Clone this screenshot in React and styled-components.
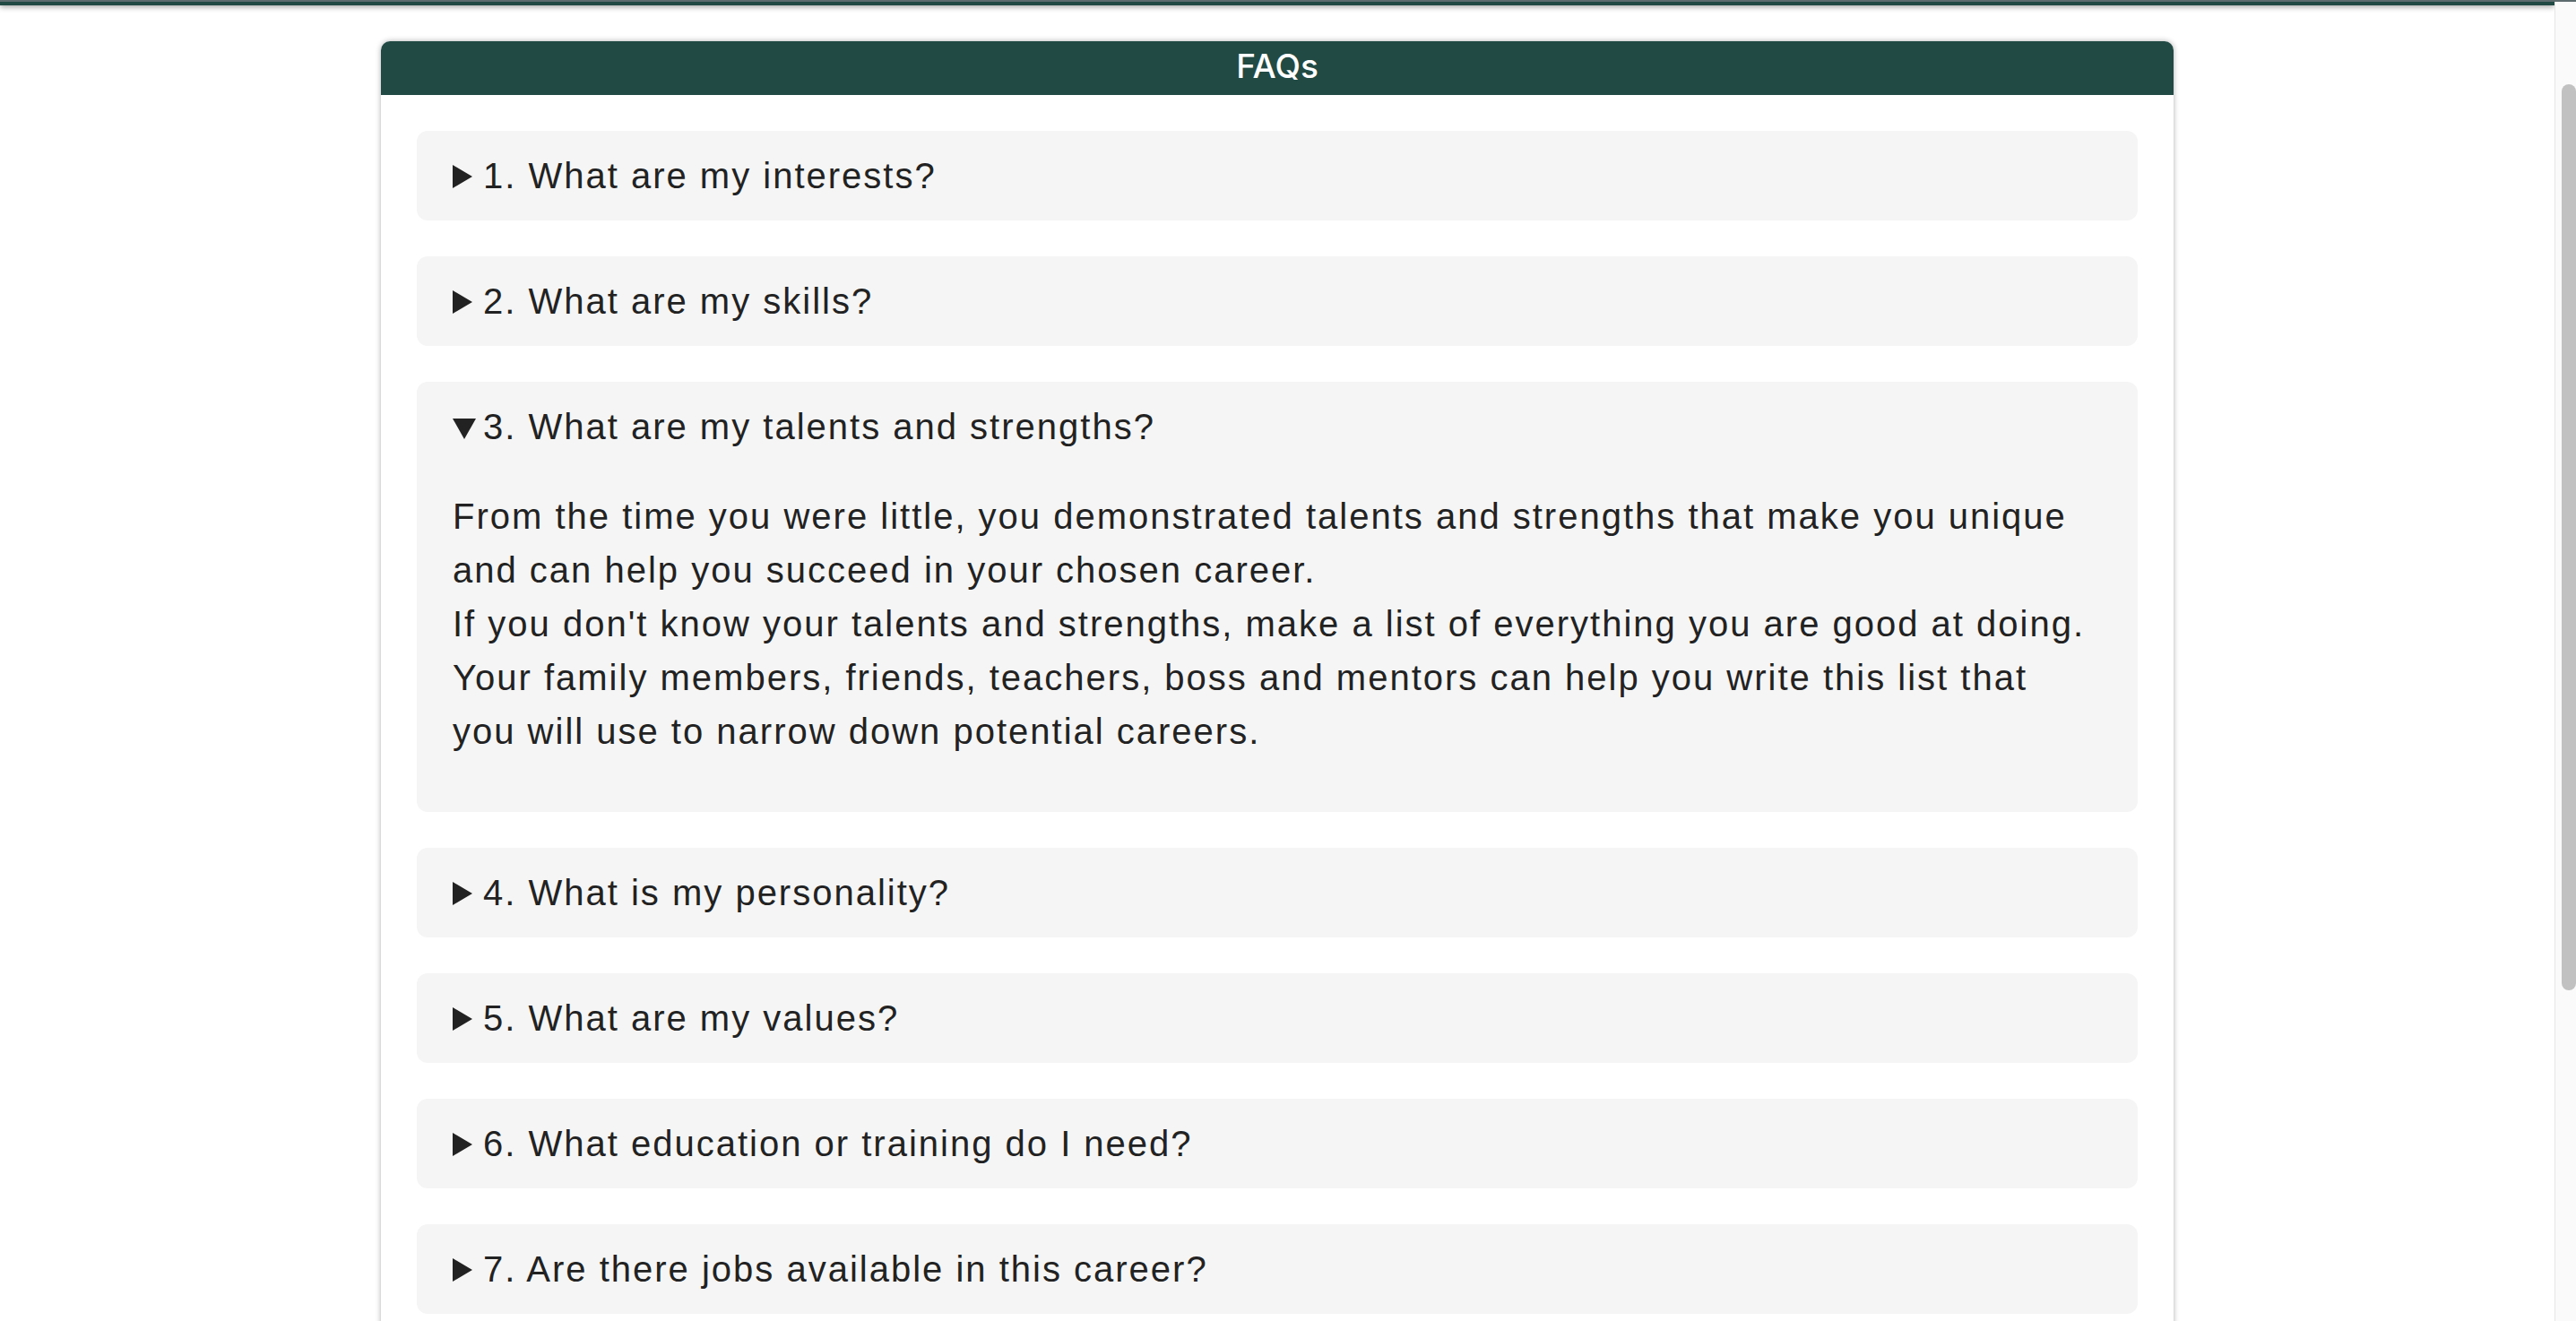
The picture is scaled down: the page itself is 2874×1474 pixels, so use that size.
import React, { useLayoutEffect, useRef } from "react";
import styled, { createGlobalStyle } from "styled-components";

const GlobalStyle = createGlobalStyle`
  html, body {
    margin: 0;
    padding: 0;
    height: 100%;
    overflow: hidden;
    background: #ffffff;
  }
  #root { height: 100%; }
  * { box-sizing: border-box; }
`;

const Viewport = styled.div`
  height: 100vh;
  display: flex;
  flex-direction: column;
  border-top: 2px solid #5e6b6e;
`;

const Window = styled.div`
  flex: 1;
  min-height: 0;
  display: flex;
`;

const Scroller = styled.div`
  flex: 1;
  min-width: 0;
  overflow-y: scroll;
  overflow-x: hidden;
  background: #ffffff;
  scrollbar-width: none;
  &::-webkit-scrollbar {
    display: none;
  }
`;

const ScrollTrack = styled.div`
  width: 24px;
  flex: 0 0 24px;
  background: #fafafa;
  border-left: 1px solid #e6e6e6;
  padding-top: 92px;
  display: flex;
  flex-direction: column;
  align-items: flex-end;
`;

const ScrollThumb = styled.div`
  width: 16px;
  height: 1011px;
  background: #c1c1c1;
  border-radius: 8px;
`;

const SiteHeader = styled.header`
  height: 138px;
  background: #214a45;
  box-shadow: 0 2px 6px rgba(0, 0, 0, 0.35);
  position: relative;
  z-index: 1;
`;

const Page = styled.main`
  display: flex;
  justify-content: center;
  padding: 40px 0 225px;
`;

const Card = styled.section`
  width: 2000px;
  background: #ffffff;
  border-radius: 10px 10px 0 0;
  box-shadow: 0 0 6px rgba(0, 0, 0, 0.32);
`;

const CardTitle = styled.h2`
  margin: 0;
  height: 60px;
  padding-bottom: 4px;
  line-height: 56px;
  background: #214a45;
  color: #ffffff;
  border-radius: 10px 10px 0 0;
  text-align: center;
  font-family: Inter, "Liberation Sans", Arial, sans-serif;
  font-weight: 500;
  font-size: 37px;
`;

const CardBody = styled.div`
  display: flex;
  flex-direction: column;
  gap: 40px;
  padding: 40px;
`;

const Item = styled.details`
  background: #f5f5f5;
  border-radius: 12px;
  padding: 20px 40px;
  font-family: "Liberation Sans", Arial, Helvetica, sans-serif;
  font-size: 40px;
  line-height: 60px;
  letter-spacing: 2px;
  color: #222222;
`;

const Question = styled.summary`
  display: block;
  list-style: none;
  cursor: pointer;
  outline: none;

  &::-webkit-details-marker {
    display: none;
  }

  &::before {
    content: "";
    display: inline-block;
    width: 0;
    height: 0;
    border-style: solid;
    border-color: transparent transparent transparent #222222;
    border-width: 13px 0 13px 22px;
    margin-right: 12px;
    vertical-align: baseline;
  }

  ${Item}[open] > &::before {
    border-color: #222222 transparent transparent transparent;
    border-width: 23px 13px 0 13px;
    margin-right: 8px;
  }
`;

const Answer = styled.p`
  margin: 40px 0;
`;

const faqs = [
  {
    q: "1. What are my interests?",
    a: ["Think about the activities you enjoy most, at school, at work and in your free time."],
  },
  {
    q: "2. What are my skills?",
    a: ["List the things you have learned to do well through practice, study and experience."],
  },
  {
    q: "3. What are my talents and strengths?",
    open: true,
    a: [
      "From the time you were little, you demonstrated talents and strengths that make you unique",
      "and can help you succeed in your chosen career.",
      "If you don't know your talents and strengths, make a list of everything you are good at doing.",
      "Your family members, friends, teachers, boss and mentors can help you write this list that",
      "you will use to narrow down potential careers.",
    ],
  },
  {
    q: "4. What is my personality?",
    a: ["Your personality helps decide which work environments suit you best."],
  },
  {
    q: "5. What are my values?",
    a: ["Your values are the things that matter most to you in life and at work."],
  },
  {
    q: "6. What education or training do I need?",
    a: ["Find out which degrees, certificates or apprenticeships are required for the career."],
  },
  {
    q: "7. Are there jobs available in this career?",
    a: ["Look at job listings and employment outlook information for your area."],
  },
  {
    q: "8. How much money can I make?",
    a: ["Research typical starting and average salaries for the career you are considering."],
  },
  {
    q: "9. Where can I learn more?",
    a: ["Talk with a counselor, mentor or someone who already works in the career."],
  },
];

export default function App() {
  const scrollRef = useRef(null);

  useLayoutEffect(() => {
    if (scrollRef.current) scrollRef.current.scrollTop = 134;
  }, []);

  return (
    <>
      <GlobalStyle />
      <Viewport>
        <Window>
          <Scroller ref={scrollRef}>
            <SiteHeader />
            <Page>
              <Card>
                <CardTitle>FAQs</CardTitle>
                <CardBody>
                  {faqs.map((f) => (
                    <Item key={f.q} open={f.open || undefined}>
                      <Question>{f.q}</Question>
                      <Answer>
                        {f.a.map((line, i) => (
                          <React.Fragment key={i}>
                            {i > 0 && <br />}
                            {line}
                          </React.Fragment>
                        ))}
                      </Answer>
                    </Item>
                  ))}
                </CardBody>
              </Card>
            </Page>
          </Scroller>
          <ScrollTrack>
            <ScrollThumb />
          </ScrollTrack>
        </Window>
      </Viewport>
    </>
  );
}
